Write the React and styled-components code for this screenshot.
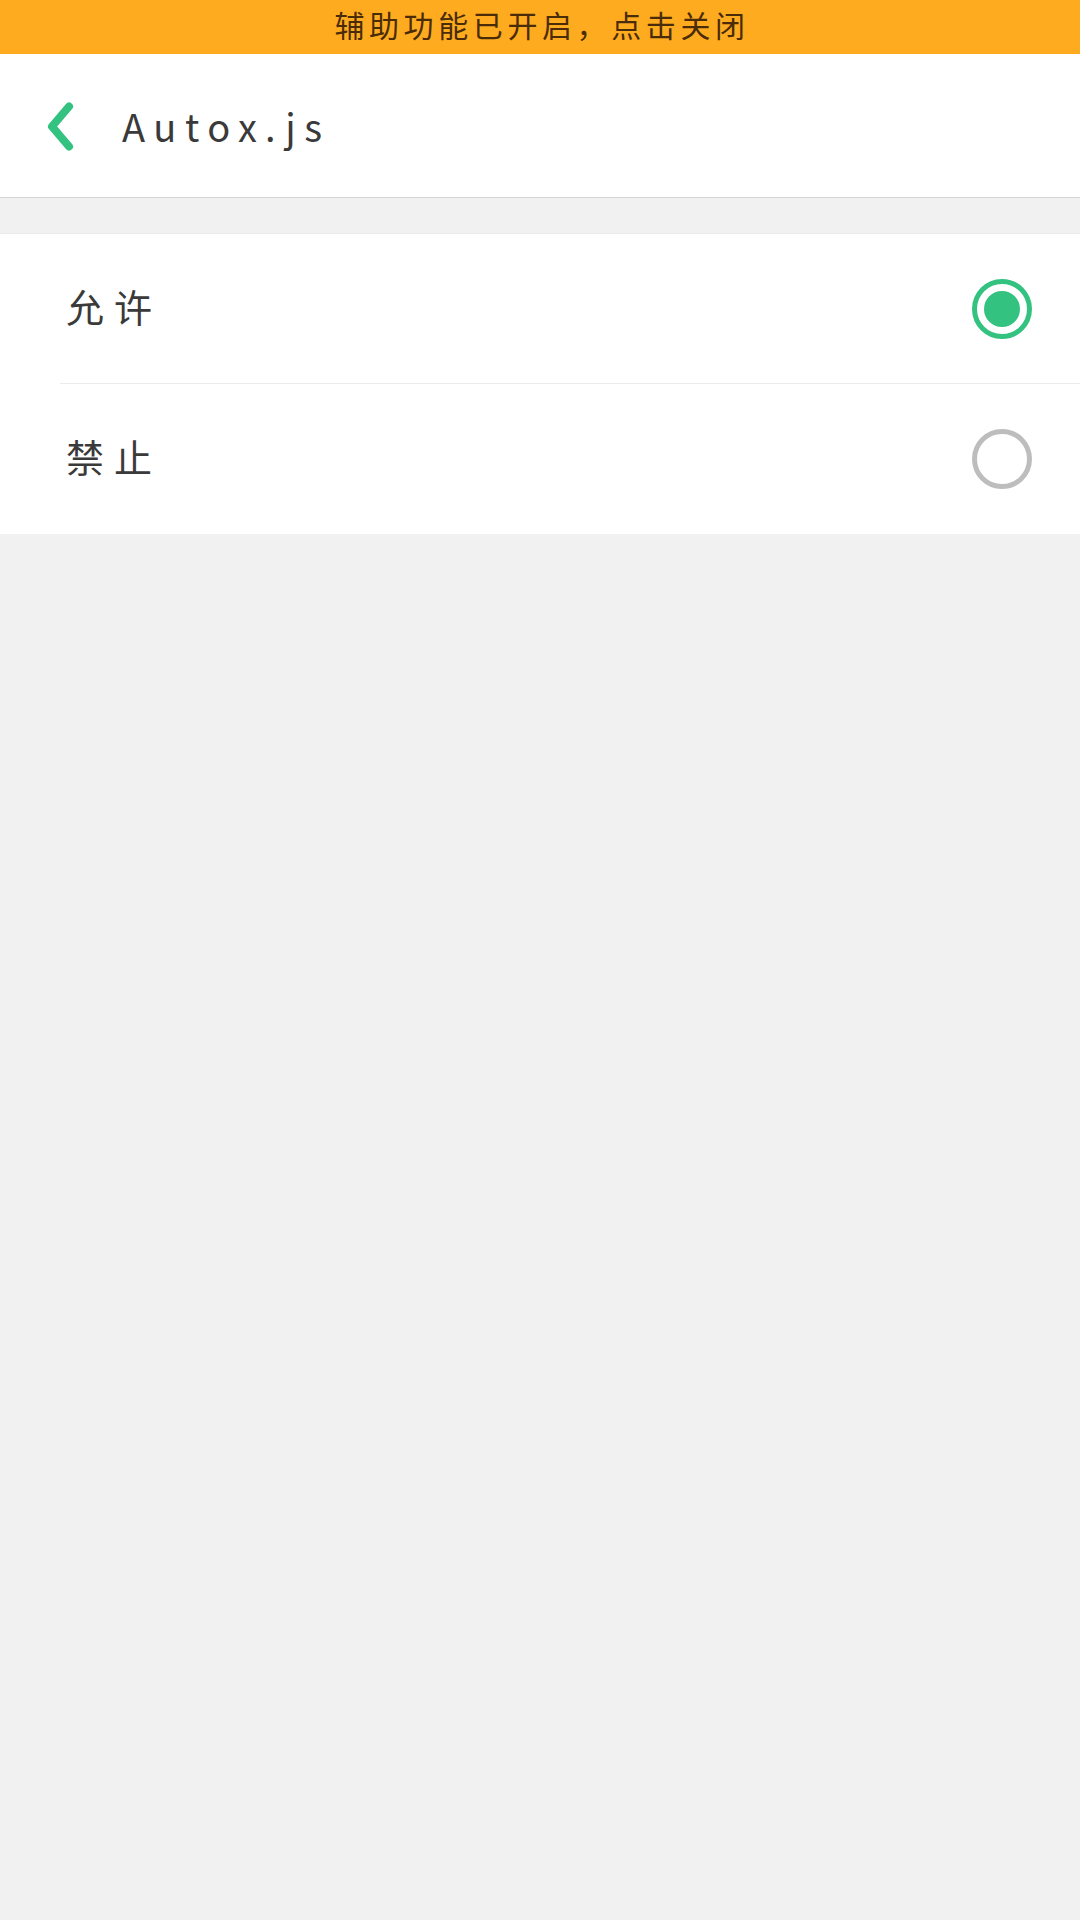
import React from "react";
import styled, { createGlobalStyle } from "styled-components";

const options = [
  { label: "允许", checked: true },
  { label: "禁止", checked: false },
];

const App = () => {
  return (
    <Page>
      <GlobalStyle />
      <Banner>辅助功能已开启，点击关闭</Banner>
      <Header>
        <BackIcon viewBox="0 0 32 54" aria-hidden="true">
          <path
            d="M25 7.5 L8 27.5 L25 47.5"
            fill="none"
            stroke="#33c27f"
            strokeWidth="8"
            strokeLinecap="round"
            strokeLinejoin="round"
          />
        </BackIcon>
        <Title>Autox.js</Title>
      </Header>
      <List>
        {options.map((option, index) => (
          <Row key={option.label} $divided={index > 0}>
            <Label>{option.label}</Label>
            <Radio $checked={option.checked} />
          </Row>
        ))}
      </List>
    </Page>
  );
};

const GlobalStyle = createGlobalStyle`
  html, body {
    margin: 0;
    padding: 0;
    background: #f1f1f1;
  }
`;

const Page = styled.div`
  display: flex;
  flex-direction: column;
  min-height: 1920px;
  background: #f1f1f1;
  color: #3a3a3a;
  font-family: "Noto Sans CJK SC", "Noto Sans", sans-serif;
`;

const Banner = styled.div`
  box-sizing: border-box;
  height: 54px;
  padding: 0 0 6px 4px;
  display: flex;
  align-items: center;
  justify-content: center;
  background: #ffab20;
  color: #4a2c08;
  font-size: 30px;
  letter-spacing: 4.6px;
  white-space: nowrap;
`;

const Header = styled.header`
  height: 143px;
  display: flex;
  align-items: center;
  gap: 46px;
  padding-left: 44px;
  background: #fff;
  border-bottom: 1px solid #d4d4d4;
`;

const BackIcon = styled.svg`
  width: 32px;
  height: 54px;
  flex: none;
`;

const Title = styled.h1`
  margin: 0;
  font-size: 38px;
  font-weight: 400;
  letter-spacing: 8.5px;
  line-height: 1;
`;

const List = styled.div`
  margin-top: 35px;
  padding-bottom: 1px;
  background: #fff;
  border-top: 1px solid #ebebeb;
`;

const Row = styled.div`
  height: 149px;
  margin-left: ${(p) => (p.$divided ? "60px" : "0")};
  padding-left: ${(p) => (p.$divided ? "6px" : "66px")};
  padding-right: 48px;
  display: flex;
  align-items: center;
  justify-content: space-between;
  border-top: ${(p) => (p.$divided ? "1px solid #ebebeb" : "none")};
`;

const Label = styled.span`
  margin-bottom: 6px;
  font-size: 38px;
  letter-spacing: 10px;
  line-height: 1;
`;

const Radio = styled.span`
  box-sizing: border-box;
  width: 60px;
  height: 60px;
  display: flex;
  align-items: center;
  justify-content: center;
  border-radius: 50%;
  border: 5px solid ${(p) => (p.$checked ? "#33c27f" : "#bdbdbd")};

  &::after {
    content: "";
    display: ${(p) => (p.$checked ? "block" : "none")};
    width: 36px;
    height: 36px;
    border-radius: 50%;
    background: #33c27f;
  }
`;

export default App;
